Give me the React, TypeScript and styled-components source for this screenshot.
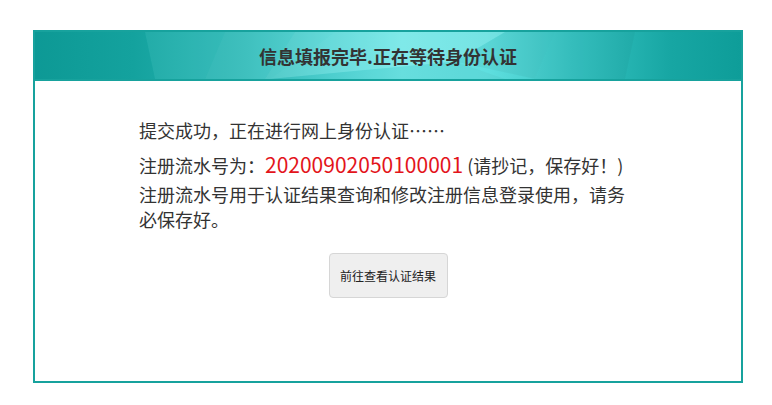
import React from "react";
import styled, { createGlobalStyle } from "styled-components";

const Global = createGlobalStyle`
  html, body { margin: 0; padding: 0; background: #ffffff; }
  body { font-family: "Noto Sans CJK SC", "Noto Sans", sans-serif; color: #333; }
`;

const Page = styled.div`
  padding: 30px 0 0 33px;
`;

const Panel = styled.div`
  width: 706px;
  border: 2px solid #17a29d;
  background: #fff;
`;

const Header = styled.div`
  position: relative;
  height: 47px;
  border-bottom: 2px solid #17a29d;
  background: linear-gradient(90deg, #0e9d99 0%, #15a6a2 14%, #2fbbb9 30%, #50d5d5 42%, #6be6e6 52%, #5fdfdf 64%, #37c4c3 76%, #17a6a3 90%, #0e9d99 100%);
  display: flex;
  align-items: center;
  justify-content: center;
  overflow: hidden;
`;

const Facets = styled.svg`
  position: absolute;
  inset: 0;
  width: 100%;
  height: 100%;
`;

const Title = styled.h1`
  position: relative;
  margin: 0;
  font-size: 18px;
  font-weight: 700;
  color: #333;
  letter-spacing: 0;
`;

const Body = styled.div`
  height: 300px;
  padding: 37px 0 0 104px;
  box-sizing: border-box;
  display: flex;
  flex-direction: column;
`;

const Text = styled.p<{ $gap?: number; $lh?: number }>`
  margin: 0 0 ${(p) => p.$gap ?? 0}px 0;
  width: 490px;
  font-size: 18px;
  line-height: ${(p) => p.$lh ?? 24}px;
  color: #333;
`;

const Serial = styled.span`
  font-size: 21px;
  color: #e3141b;
`;

const Actions = styled.div`
  display: flex;
  justify-content: center;
  margin-left: -104px;
  margin-top: 21px;
`;

const Button = styled.button`
  width: 119px;
  height: 45px;
  border: 1px solid #d6d6d6;
  border-radius: 4px;
  background: #efefef;
  font-family: "Noto Sans CJK SC", sans-serif;
  font-size: 12px;
  color: #222;
  cursor: pointer;
  padding: 0;
`;

export default function App() {
  return (
    <>
      <Global />
      <Page>
        <Panel>
          <Header>
            <Facets viewBox="0 0 706 48" preserveAspectRatio="none">
              <polygon points="110,0 190,0 170,48 120,48" fill="#ffffff" opacity="0.05" />
              <polygon points="190,0 260,0 230,48 170,48" fill="#ffffff" opacity="0.08" />
              <polygon points="260,0 300,0 235,48 230,48" fill="#ffffff" opacity="0.12" />
              <polygon points="300,0 470,0 420,30 235,48" fill="#ffffff" opacity="0.14" />
              <polygon points="235,48 420,30 470,48" fill="#000000" opacity="0.03" />
              <polygon points="470,0 520,0 500,48 420,30" fill="#000000" opacity="0.04" />
              <polygon points="520,0 600,0 590,48 500,48" fill="#000000" opacity="0.03" />
              <polygon points="0,0 110,0 120,48 0,48" fill="#000000" opacity="0.02" />
            </Facets>
            <Title>信息填报完毕.正在等待身份认证</Title>
          </Header>
          <Body>
            <Text $gap={7}>提交成功，正在进行网上身份认证……</Text>
            <Text $gap={2} $lh={30}>
              注册流水号为：<Serial>20200902050100001</Serial> (请抄记，保存好！)
            </Text>
            <Text $lh={25}>注册流水号用于认证结果查询和修改注册信息登录使用，请务必保存好。</Text>
            <Actions>
              <Button type="button">前往查看认证结果</Button>
            </Actions>
          </Body>
        </Panel>
      </Page>
    </>
  );
}
